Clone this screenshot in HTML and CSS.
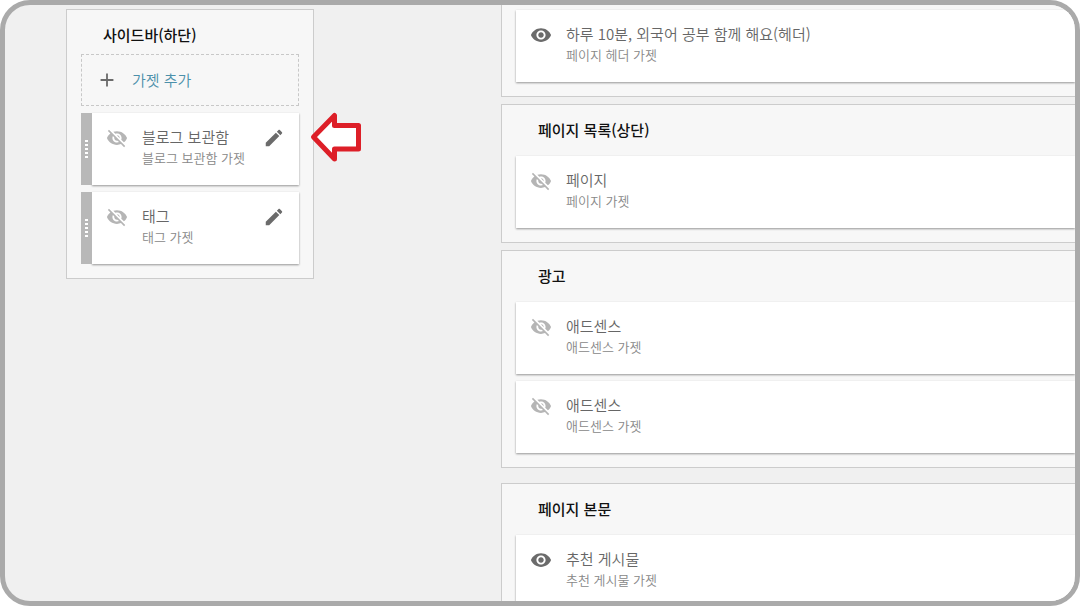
FILE: index.html
```
<!DOCTYPE html>
<html lang="ko">
<head>
<meta charset="utf-8">
<meta name="viewport" content="width=device-width, initial-scale=1">
<title>레이아웃</title>
<link rel="stylesheet" href="styles.css">
</head>
<body>
<svg class="sprite" aria-hidden="true">
  <symbol id="icon-eye" viewBox="0 0 24 24"><path d="M12 4.500C7 4.500 2.730 7.610 1 12c1.730 4.390 6 7.500 11 7.500s9.270-3.110 11-7.500c-1.730-4.390-6-7.500-11-7.500zM12 17c-2.760 0-5-2.240-5-5s2.240-5 5-5 5 2.240 5 5-2.240 5-5 5zm0-8c-1.660 0-3 1.340-3 3s1.340 3 3 3 3-1.340 3-3-1.340-3-3-3z"/></symbol>
  <symbol id="icon-eye-off" viewBox="0 0 24 24"><path d="M12 7c2.760 0 5 2.240 5 5 0 .65-.13 1.260-.36 1.830l2.920 2.920c1.510-1.260 2.700-2.890 3.430-4.750-1.730-4.390-6-7.500-11-7.500-1.400 0-2.740.25-3.980.7l2.160 2.160C10.740 7.130 11.350 7 12 7zM2 4.270l2.280 2.280.46.46C3.080 8.300 1.780 10.020 1 12c1.730 4.390 6 7.500 11 7.500 1.550 0 3.030-.3 4.380-.84l.42.42L19.730 22 21 20.730 3.270 3 2 4.270zM7.530 9.800l1.550 1.550c-.05.21-.08.43-.08.65 0 1.660 1.340 3 3 3 .22 0 .44-.03.65-.08l1.550 1.550c-.67.33-1.410.53-2.200.53-2.760 0-5-2.240-5-5 0-.79.2-1.530.53-2.200zm4.310-.78l3.150 3.150.02-.16c0-1.660-1.340-3-3-3l-.17.01z"/></symbol>
  <symbol id="icon-edit" viewBox="0 0 24 24"><path d="M3 17.250V21h3.750L17.810 9.940l-3.750-3.750L3 17.250zM20.710 7.040c.39-.39.39-1.020 0-1.410l-2.340-2.340c-.39-.39-1.020-.39-1.410 0l-1.830 1.830 3.750 3.750 1.830-1.830z"/></symbol>
  <symbol id="icon-add" viewBox="0 0 24 24"><path d="M19 13h-6v6h-2v-6H5v-2h6V5h2v6h6v2z"/></symbol>
</svg>

<div class="frame">
  <aside class="sidebar">
    <section class="section">
      <h2 class="section-title section-title-compact">사이드바(하단)</h2>
      <button class="add-gadget" type="button">
        <svg class="icon"><use href="#icon-add"/></svg>
        <span>가젯 추가</span>
      </button>
      <article class="card card-draggable">
        <svg class="icon icon-muted"><use href="#icon-eye-off"/></svg>
        <div class="card-text"><h3 class="card-title">블로그 보관함</h3><p class="card-sub">블로그 보관함 가젯</p></div>
        <button class="edit" type="button" aria-label="블로그 보관함 수정"><svg class="icon"><use href="#icon-edit"/></svg></button>
      </article>
      <article class="card card-draggable">
        <svg class="icon icon-muted"><use href="#icon-eye-off"/></svg>
        <div class="card-text"><h3 class="card-title">태그</h3><p class="card-sub">태그 가젯</p></div>
        <button class="edit" type="button" aria-label="태그 수정"><svg class="icon"><use href="#icon-edit"/></svg></button>
      </article>
      <svg class="arrow" viewBox="0 0 52 52" aria-hidden="true"><path d="M3.500 26 24.500 4.500V14.500H48.500V38H24.500V48Z"/></svg>
    </section>
  </aside>

  <main class="main">
    <section class="section section-continued">
      <article class="card">
        <svg class="icon"><use href="#icon-eye"/></svg>
        <div class="card-text"><h3 class="card-title">하루 10분, 외국어 공부 함께 해요(헤더)</h3><p class="card-sub">페이지 헤더 가젯</p></div>
      </article>
    </section>
    <section class="section">
      <h2 class="section-title">페이지 목록(상단)</h2>
      <article class="card">
        <svg class="icon icon-muted"><use href="#icon-eye-off"/></svg>
        <div class="card-text"><h3 class="card-title">페이지</h3><p class="card-sub">페이지 가젯</p></div>
      </article>
    </section>
    <section class="section">
      <h2 class="section-title">광고</h2>
      <article class="card">
        <svg class="icon icon-muted"><use href="#icon-eye-off"/></svg>
        <div class="card-text"><h3 class="card-title">애드센스</h3><p class="card-sub">애드센스 가젯</p></div>
      </article>
      <article class="card">
        <svg class="icon icon-muted"><use href="#icon-eye-off"/></svg>
        <div class="card-text"><h3 class="card-title">애드센스</h3><p class="card-sub">애드센스 가젯</p></div>
      </article>
    </section>
    <section class="section section-body">
      <h2 class="section-title">페이지 본문</h2>
      <article class="card">
        <svg class="icon"><use href="#icon-eye"/></svg>
        <div class="card-text"><h3 class="card-title">추천 게시물</h3><p class="card-sub">추천 게시물 가젯</p></div>
      </article>
    </section>
  </main>
</div>
</body>
</html>
```

FILE: styles.css
```
* {
  box-sizing: border-box;
}

body {
  margin: 0;
  background: #fff;
  color: #666;
  font-family: "Noto Sans CJK KR", "Noto Sans", sans-serif;
}

h2,
h3,
p {
  margin: 0;
}

button {
  border: 0;
  padding: 0;
  background: none;
  color: inherit;
  font: inherit;
  cursor: pointer;
}

.sprite {
  display: none;
}

.frame {
  display: flex;
  align-items: flex-start;
  gap: 187px;
  height: 100vh;
  padding-left: 61px;
  border: 5px solid #aaa;
  border-radius: 30px;
  background: #f0f0f0;
  overflow: hidden;
}

.sidebar {
  flex: 0 0 248px;
  padding-top: 4px;
}

.main {
  display: flex;
  flex: 1;
  flex-direction: column;
  gap: 7px;
  min-width: 0;
}

.section {
  position: relative;
  display: flex;
  flex-direction: column;
  gap: 7px;
  padding: 0 14px 14px;
  border: 1px solid #ccc;
  background: #f7f7f7;
}

.main .section {
  padding-right: 0;
  border-right: 0;
}

.section-continued {
  padding-top: 5px;
  border-top: 0;
}

.section-body {
  margin-top: 8px;
}

.section-title {
  padding: 14px 22px 0;
  height: 44px;
  color: #111;
  font-size: 15px;
  font-weight: 500;
  line-height: 22px;
}

.section-title-compact {
  height: 37px;
}

.add-gadget {
  display: flex;
  align-items: center;
  gap: 14px;
  height: 52px;
  padding-left: 14px;
  border: 1px dashed #c8c8c8;
  color: #4c90aa;
  font-size: 15px;
  font-weight: 350;
  line-height: 22px;
}

.card {
  position: relative;
  display: flex;
  align-items: flex-start;
  gap: 14px;
  height: 72px;
  padding: 14px 14px 0;
  background: #fff;
  box-shadow: 0 1px 2px rgba(0, 0, 0, 0.4);
}

.card-draggable {
  margin-left: 11px;
}

.card-draggable::before {
  content: "";
  position: absolute;
  top: 0;
  bottom: 0;
  left: -11px;
  width: 11px;
  background: #b8b8b8;
}

.card-draggable::after {
  content: "";
  position: absolute;
  top: 27px;
  left: -7px;
  width: 3px;
  height: 18px;
  background: repeating-linear-gradient(#fff 0 2px, transparent 2px 4px);
}

.card-text {
  flex: 1;
  min-width: 0;
}

.card-title {
  color: #666;
  font-size: 15px;
  font-weight: 350;
  line-height: 20px;
}

.card-sub {
  color: #888;
  font-size: 13px;
  font-weight: 350;
  line-height: 22px;
}

.icon {
  display: block;
  flex: none;
  width: 22px;
  height: 22px;
  fill: #6b6b6b;
}

.icon-muted {
  fill: #b5b5b5;
}

.arrow {
  position: absolute;
  top: 101px;
  left: 243px;
  width: 52px;
  height: 52px;
  fill: #fff;
  stroke: #dd1f28;
  stroke-width: 5;
  stroke-linejoin: round;
}
```
